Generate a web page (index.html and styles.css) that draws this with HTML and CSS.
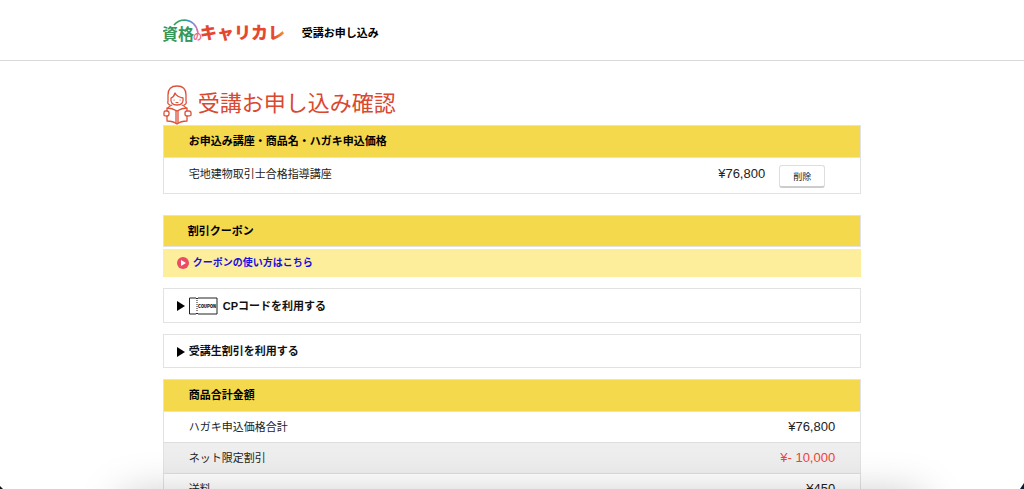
FILE: index.html
```html
<!DOCTYPE html>
<html lang="ja">
<head>
<meta charset="utf-8">
<meta name="viewport" content="width=device-width, initial-scale=1">
<title>受講お申し込み確認</title>
<link rel="stylesheet" href="styles.css">
</head>
<body>
<header class="site-header">
  <div class="container header-inner">
    <svg class="logo" width="122" height="26" viewBox="0 0 122 26" role="img" aria-label="資格のキャリカレ">
      <defs>
        <linearGradient id="arc" x1="0" x2="1" y1="0" y2="0">
          <stop offset="0" stop-color="#2f9d58"/>
          <stop offset=".42" stop-color="#35a66b"/>
          <stop offset=".62" stop-color="#3c8fd0"/>
          <stop offset=".85" stop-color="#9b8ad0"/>
          <stop offset="1" stop-color="#f0609a"/>
        </linearGradient>
        <linearGradient id="warm" gradientUnits="userSpaceOnUse" x1="36" x2="122" y1="0" y2="14">
          <stop offset="0" stop-color="#e5452f"/>
          <stop offset=".88" stop-color="#e5492f"/>
          <stop offset="1" stop-color="#f39a35"/>
        </linearGradient>
      </defs>
      <path d="M11 7Q15 2 22 2Q33 3 35 15" fill="none" stroke="url(#arc)" stroke-width="1.6"/>
      <text class="logo-green" x="-1" y="22">資格</text>
      <text class="logo-pink" x="30" y="22">の</text>
      <text class="logo-red" x="37" y="21" fill="url(#warm)">キャリカレ</text>
    </svg>
    <p class="header-title">受講お申し込み</p>
  </div>
</header>

<main class="container">
  <h1 class="page-title">
    <svg width="29" height="40" viewBox="0 0 29 40" fill="none" stroke="#df5038" stroke-width="1.3" stroke-linecap="round" stroke-linejoin="round" aria-hidden="true">
      <path d="M7 20Q4 19 5 16V10Q5 1 14 1Q23 1 23 10V16Q24 19 21 20"/>
      <path d="M8 13Q7 20 14 20Q21 20 20 13Q14 12 12 8Q11 12 8 13Z"/>
      <path d="M11 15h.2M17 15h.2M13 17.5h2M9 20Q6 21 5 23M19 20Q22 21 23 23" stroke-width="1.1"/>
      <path d="M14 26Q9 23 4 23V36Q10 36 14 39Q18 36 24 36V23Q19 23 14 26"/>
      <path d="M13 26V38M15 26V38"/>
      <path d="M4 26H2Q1 26 1 28V30Q1 31 4 31Q6 31 6 29V28Q6 26 4 26ZM24 26H26Q28 26 28 28V30Q28 31 24 31Q22 31 22 29V28Q22 26 24 26Z" fill="#fff"/>
    </svg>
    <span>受講お申し込み確認</span>
  </h1>

  <table class="panel items">
    <thead><tr><th colspan="3" scope="col">お申込み講座・商品名・ハガキ申込価格</th></tr></thead>
    <tbody>
      <tr>
        <td>宅地建物取引士合格指導講座</td>
        <td class="price">¥76,800</td>
        <td class="action"><button class="delete" type="button">削除</button></td>
      </tr>
    </tbody>
  </table>

  <section class="coupons">
    <h2 class="section-title">割引クーポン</h2>
    <p class="coupon-help">
      <svg width="12" height="12" viewBox="0 0 12 12" aria-hidden="true"><circle cx="6" cy="6" r="6" fill="#ea4c66"/><path d="M4 3L9 6L4 9Z" fill="#fff"/></svg>
      <a href="#coupon-help">クーポンの使い方はこちら</a>
    </p>
    <details class="option">
      <summary>
        <svg class="marker" width="8" height="10" viewBox="0 0 8 10" aria-hidden="true"><path d="M0 0L8 5L0 10Z"/></svg>
        <svg class="ticket" width="29" height="18" viewBox="0 0 29 18" aria-hidden="true">
          <path d="M.5 1H7Q8 3 9 1H28V17H9Q8 15 7 17H.5Z" fill="none" stroke="#222"/>
          <path d="M8 3V15" stroke="#222" stroke-dasharray="1 1"/>
          <text x="9" y="11">COUPON</text>
        </svg>
        <span>CPコードを利用する</span>
      </summary>
    </details>
    <details class="option">
      <summary>
        <svg class="marker" width="8" height="10" viewBox="0 0 8 10" aria-hidden="true"><path d="M0 0L8 5L0 10Z"/></svg>
        <span>受講生割引を利用する</span>
      </summary>
    </details>
  </section>

  <table class="panel totals">
    <thead><tr><th colspan="2" scope="colgroup">商品合計金額</th></tr></thead>
    <tbody>
      <tr><td>ハガキ申込価格合計</td><td class="price">¥76,800</td></tr>
      <tr class="shaded"><td>ネット限定割引</td><td class="price discount">¥- 10,000</td></tr>
      <tr><td>送料</td><td class="price">¥450</td></tr>
    </tbody>
  </table>
</main>
<div class="dock-shadow"></div>
<div class="corner corner-left"></div>
<div class="corner corner-right"></div>
</body>
</html>
```

FILE: styles.css
```css
* { box-sizing: border-box; }

body {
  margin: 0;
  height: 100vh;
  overflow: hidden;
  background: #fff;
  color: #222;
  font: 11px/16px "Liberation Sans", "Noto Sans CJK JP", sans-serif;
}

.container {
  width: 68.2%;
  margin: 0 auto;
}

.site-header {
  padding: 18px 0 16px;
  border-bottom: 1px solid #d8d8d8;
}

.header-inner {
  display: flex;
  align-items: center;
  gap: 17px;
}

.header-title {
  margin: 0;
  padding-top: 3px;
  color: #000;
  font-weight: bold;
}

.logo-green { font: bold 16px "Noto Sans CJK JP", sans-serif; fill: #35985a; }
.logo-pink { font: bold 9px "Noto Sans CJK JP", sans-serif; fill: #ef6a86; }
.logo-red { font: 900 17px "Noto Sans CJK JP", sans-serif; }

.page-title {
  display: flex;
  align-items: center;
  gap: 6px;
  margin: 24px 0 0;
  color: #d9482f;
  font-size: 22px;
  font-weight: normal;
  line-height: 36px;
}

.page-title span { padding-bottom: 2px; }

.panel {
  width: 100%;
  border: 1px solid #e2e2e2;
  border-collapse: collapse;
}

.panel th,
.section-title {
  margin: 0;
  padding: 7px 25px 8px;
  border: 1px solid #e2e2e2;
  background: #f5d94c;
  color: #000;
  font-size: 11px;
  font-weight: bold;
  text-align: left;
}

.section-title { padding: 7px 24px; }

.panel td { padding: 7px 25px; }
.panel .price { font-size: 13px; text-align: right; }
.panel .discount { color: #ee4437; }

.items .price { padding: 0 14px 4px 0; }
.items td:first-child { padding: 6px 25px 10px; }
.items .action { width: 81px; padding: 7px 35px 5px 0; }

.delete {
  display: block;
  width: 46px;
  height: 23px;
  padding: 0;
  border: 1px solid #dedede;
  border-bottom: 2px solid #ccc;
  border-radius: 3px;
  background: #fff;
  color: #222;
  font: 9px "Noto Sans CJK JP", sans-serif;
}

.coupons { margin: 21px 0 11px; }

.coupon-help {
  display: flex;
  align-items: center;
  gap: 4px;
  margin: 2px 0 11px;
  padding: 6px 14px;
  background: #fdee9b;
  font-size: 10px;
  font-weight: bold;
}

.coupon-help a { color: #1a10e0; text-decoration: none; }

.option {
  margin-top: 11px;
  border: 1px solid #e2e2e2;
}

.option summary {
  display: flex;
  align-items: center;
  gap: 4px;
  padding: 8px 13px 7px;
  color: #111;
  font-weight: bold;
  line-height: 17px;
  list-style: none;
}

.ticket { margin-right: 1px; }
.ticket text { font: bold 5px "Liberation Mono", monospace; }

.totals tr + tr { border-top: 1px solid #dedede; }
.totals .shaded { background: #eee; }

/* Soft shadow and rounded screen corners over the lower edge of the window */
.dock-shadow {
  position: fixed;
  top: calc(100% + 8px);
  left: 12%;
  right: 10%;
  height: 60px;
  box-shadow: 0 0 44px rgba(0, 0, 0, 0.26);
  pointer-events: none;
}

.corner {
  position: fixed;
  bottom: 0;
  width: 3px;
  height: 3px;
  background: #111;
}

.corner-left { left: 0; clip-path: polygon(0 0, 100% 100%, 0 100%); }
.corner-right {
  right: 0;
  width: 4px;
  height: 6px;
  background: #0b1c30;
  clip-path: polygon(100% 0, 100% 100%, 0 100%);
}
```
